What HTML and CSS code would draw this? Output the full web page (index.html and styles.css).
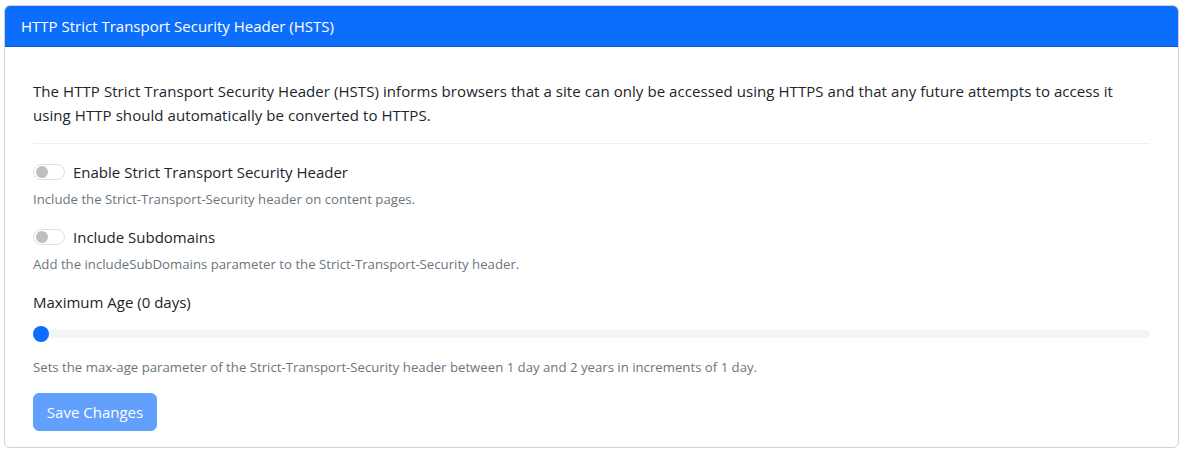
FILE: index.html
```html
<!DOCTYPE html>
<html lang="en">
<head>
<meta charset="utf-8">
<title>HSTS</title>
<link rel="stylesheet" href="styles.css">
</head>
<body>
<div class="card">
  <div class="card-header">HTTP Strict Transport Security Header (HSTS)</div>
  <div class="card-body">
    <p class="intro">The HTTP Strict Transport Security Header (HSTS) informs browsers that a site can only be accessed using HTTPS and that any future attempts to access it using HTTP should automatically be converted to HTTPS.</p>
    <hr class="divider">
    <div class="field">
      <label class="switch-row"><span class="switch"><span class="knob"></span></span><span>Enable Strict Transport Security Header</span></label>
      <div class="help">Include the Strict-Transport-Security header on content pages.</div>
    </div>
    <div class="field">
      <label class="switch-row"><span class="switch"><span class="knob"></span></span><span>Include Subdomains</span></label>
      <div class="help">Add the includeSubDomains parameter to the Strict-Transport-Security header.</div>
    </div>
    <div class="field">
      <div class="range-label">Maximum Age (0 days)</div>
      <div class="range"><span class="thumb"></span></div>
      <div class="help">Sets the max-age parameter of the Strict-Transport-Security header between 1 day and 2 years in increments of 1 day.</div>
    </div>
    <button class="btn" disabled>Save Changes</button>
  </div>
</div>
</body>
</html>
```

FILE: styles.css
```css
html, body {
  margin: 0;
  padding: 0;
  background: #fff;
}
body {
  padding: 5px 8px 0 4px;
  font-family: "Open Sans", "Noto Sans", sans-serif;
  font-size: 16px;
  color: #212529;
}
.card {
  border: 1px solid #cfd1d3;
  border-radius: 6px;
  overflow: hidden;
  width: 1173px;
}
.card-header {
  background: #0d6efd;
  color: #fff;
  height: 41px;
  box-sizing: border-box;
  border-bottom: 1px solid #0a58ca;
  padding: 0 16px;
  display: flex;
  align-items: center;
  font-size: 15px;
}
.card-body {
  padding: 32px 28px 16px 28px;
}
.intro {
  margin: 0;
  line-height: 24px;
  font-size: 15px;
  letter-spacing: 0.07px;
}
.divider {
  border: 0;
  border-top: 1px solid #eceeef;
  margin: 16px 0 16px;
}
.field {
  margin-bottom: 15px;
}
.switch-row {
  display: flex;
  align-items: center;
  gap: 8px;
  height: 24px;
  font-size: 15px;
}
.switch {
  width: 26px;
  height: 14px;
  border: 1px solid #dee2e6;
  border-radius: 8px;
  display: flex;
  align-items: center;
  padding: 0 2px;
  box-sizing: content-box;
}
.knob {
  width: 12px;
  height: 12px;
  border-radius: 50%;
  background: #bfbfbf;
}
.help {
  margin-top: 5px;
  font-size: 13.2px;
  color: #6c757d;
  line-height: 21px;
}
.range-label {
  font-size: 15px;
  line-height: 24px;
}
.range {
  margin: 16px 0 19px;
  height: 8px;
  background: #f3f4f5;
  border-radius: 4px;
  display: flex;
  align-items: center;
}
.btn {
  display: block;
  font-family: inherit;
  font-size: 15px;
  color: #fff;
  background: #0d6efd;
  border: 1px solid #0d6efd;
  border-radius: 6px;
  padding: 0 12px;
  height: 38px;
  width: 124px;
  opacity: .65;
}
.thumb {
  width: 16px;
  height: 16px;
  border-radius: 50%;
  background: #0d6efd;
}
```
